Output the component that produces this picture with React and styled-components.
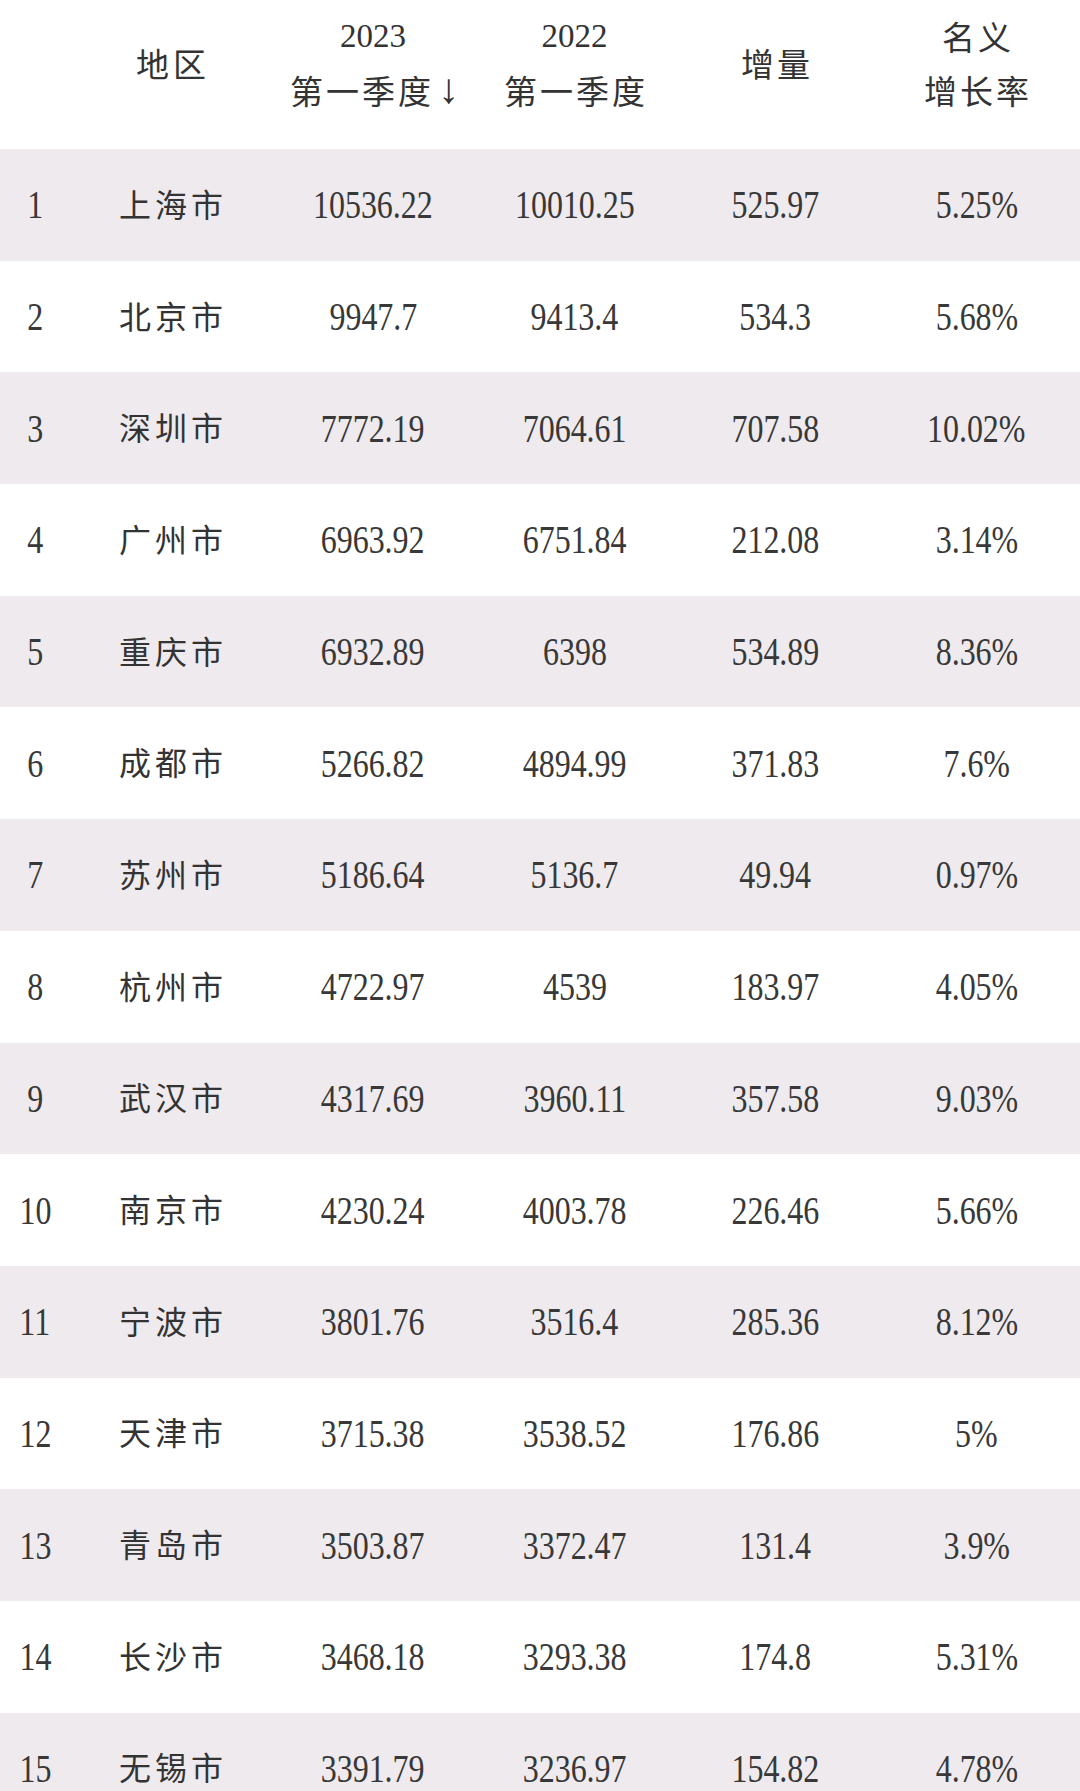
import React from "react";
import styled, { createGlobalStyle } from "styled-components";

const Global = createGlobalStyle`
  html, body {
    margin: 0;
    padding: 0;
    overflow: hidden;
    background: #ffffff;
  }
  body {
    font-family: "Liberation Serif", "Noto Sans CJK SC", serif;
    color: #333333;
  }
`;

const COLS = "70px 202px 202px 201px 201px 201px";

const Table = styled.div`
  width: 1080px;
  display: flex;
  flex-direction: column;
`;

const HeaderRow = styled.div`
  display: grid;
  grid-template-columns: ${COLS};
  height: 149px;
  background: #ffffff;
`;

const HeadCell = styled.div`
  display: flex;
  flex-direction: column;
  align-items: center;
  justify-content: center;
  padding-bottom: 24px;
  box-sizing: border-box;
`;

const HeadCJK = styled.div`
  display: flex;
  align-items: center;
  font-family: "Noto Sans CJK SC", sans-serif;
  font-size: 33px;
  line-height: 54px;
  height: 54px;
  letter-spacing: ${(p) => p.$spacing || 3}px;
  padding-left: ${(p) => p.$spacing || 3}px;
  color: #333333;
  white-space: nowrap;
`;

const HeadYear = styled.div`
  font-family: "Liberation Serif", serif;
  font-size: 33px;
  line-height: 54px;
  color: #333333;
`;

const Arrow = styled.span`
  font-family: "Liberation Serif", serif;
  font-size: 42px;
  line-height: 1;
  margin-left: 4px;
  letter-spacing: 0;
  transform: translateY(-1px);
`;

const Row = styled.div`
  display: grid;
  grid-template-columns: ${COLS};
  height: 111.7px;
  flex: none;
  background: ${(p) => (p.$shade ? "#eeeaee" : "#ffffff")};
`;

const Cell = styled.div`
  display: flex;
  align-items: center;
  justify-content: center;
`;

const Num = styled.span`
  display: inline-block;
  font-family: "Liberation Serif", serif;
  font-size: 41px;
  line-height: 1;
  transform: scaleX(0.78);
  transform-origin: center;
  white-space: nowrap;
  color: #383838;
`;

const Region = styled.span`
  font-family: "Noto Sans CJK SC", sans-serif;
  font-size: 32px;
  line-height: 1;
  letter-spacing: 4px;
  padding-left: 4px;
  color: #333333;
  white-space: nowrap;
  transform: translateY(-2px);
`;

const rows = [
  [1, "上海市", "10536.22", "10010.25", "525.97", "5.25%"],
  [2, "北京市", "9947.7", "9413.4", "534.3", "5.68%"],
  [3, "深圳市", "7772.19", "7064.61", "707.58", "10.02%"],
  [4, "广州市", "6963.92", "6751.84", "212.08", "3.14%"],
  [5, "重庆市", "6932.89", "6398", "534.89", "8.36%"],
  [6, "成都市", "5266.82", "4894.99", "371.83", "7.6%"],
  [7, "苏州市", "5186.64", "5136.7", "49.94", "0.97%"],
  [8, "杭州市", "4722.97", "4539", "183.97", "4.05%"],
  [9, "武汉市", "4317.69", "3960.11", "357.58", "9.03%"],
  [10, "南京市", "4230.24", "4003.78", "226.46", "5.66%"],
  [11, "宁波市", "3801.76", "3516.4", "285.36", "8.12%"],
  [12, "天津市", "3715.38", "3538.52", "176.86", "5%"],
  [13, "青岛市", "3503.87", "3372.47", "131.4", "3.9%"],
  [14, "长沙市", "3468.18", "3293.38", "174.8", "5.31%"],
  [15, "无锡市", "3391.79", "3236.97", "154.82", "4.78%"],
];

export default function App() {
  return (
    <>
      <Global />
      <Table>
        <HeaderRow>
          <HeadCell />
          <HeadCell>
            <HeadCJK $spacing={4}>地区</HeadCJK>
          </HeadCell>
          <HeadCell>
            <HeadYear>2023</HeadYear>
            <HeadCJK $spacing={3}>
              第一季度<Arrow>↓</Arrow>
            </HeadCJK>
          </HeadCell>
          <HeadCell>
            <HeadYear>2022</HeadYear>
            <HeadCJK $spacing={3}>第一季度</HeadCJK>
          </HeadCell>
          <HeadCell>
            <HeadCJK $spacing={3}>增量</HeadCJK>
          </HeadCell>
          <HeadCell>
            <HeadCJK $spacing={3}>名义</HeadCJK>
            <HeadCJK $spacing={3}>增长率</HeadCJK>
          </HeadCell>
        </HeaderRow>
        {rows.map((r) => (
          <Row key={r[0]} $shade={r[0] % 2 === 1}>
            <Cell>
              <Num>{r[0]}</Num>
            </Cell>
            <Cell>
              <Region>{r[1]}</Region>
            </Cell>
            <Cell>
              <Num>{r[2]}</Num>
            </Cell>
            <Cell>
              <Num>{r[3]}</Num>
            </Cell>
            <Cell>
              <Num>{r[4]}</Num>
            </Cell>
            <Cell>
              <Num>{r[5]}</Num>
            </Cell>
          </Row>
        ))}
      </Table>
    </>
  );
}
